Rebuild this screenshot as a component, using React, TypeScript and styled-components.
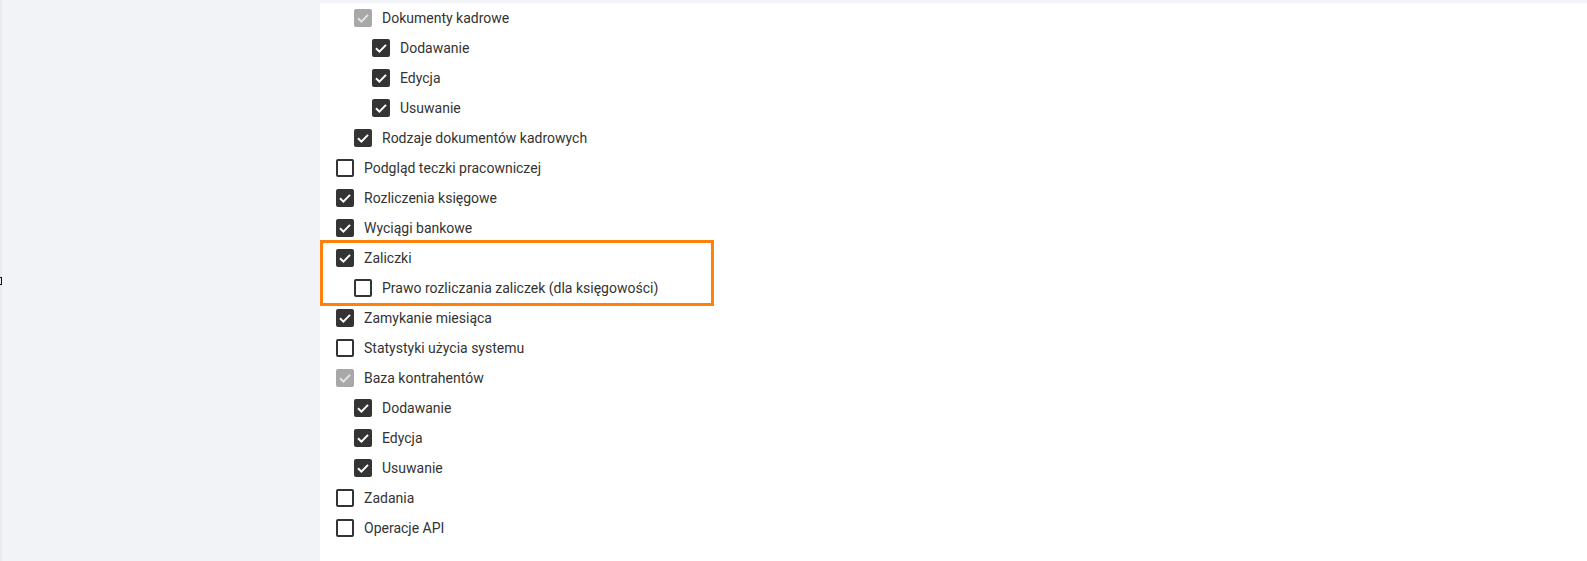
import React from "react";
import styled, { createGlobalStyle } from "styled-components";

type State = "on" | "off" | "mixed";

interface Perm {
	label: string;
	level: number;
	state: State;
}

const GlobalStyle = createGlobalStyle`
	html, body {
		margin: 0;
		padding: 0;
		background: #f1f3f7;
	}
	body {
		font-family: Roboto, "Noto Sans", Arial, sans-serif;
	}
`;

const Page = styled.div`
	display: flex;
	width: 1587px;
	height: 561px;
	overflow: hidden;
	background: #f1f3f7;
`;

const Sidebar = styled.aside`
	width: 320px;
	flex: none;
	border-left: 2px solid #e7ebf0;
	padding-top: 277px;
	box-sizing: border-box;
`;

/* little cut-off handle peeking in from the left edge */
const Handle = styled.span`
	display: block;
	width: 8px;
	height: 8px;
	margin-left: -8px;
	border: 1.5px solid #111;
	box-sizing: border-box;
`;

const Panel = styled.section`
	flex: 1;
	margin-top: 3px;
	background: #ffffff;
	padding-left: 16px;
`;

const Row = styled.label<{ $level: number }>`
	display: flex;
	align-items: center;
	gap: 10px;
	height: 30px;
	padding-left: ${(p) => p.$level * 18}px;
	font-size: 14px;
	color: #333333;
	cursor: pointer;
`;

const Box = styled.span<{ $state: State }>`
	display: flex;
	align-items: center;
	justify-content: center;
	width: 18px;
	height: 18px;
	flex: none;
	box-sizing: border-box;
	border-radius: 2px;
	border: ${(p) => (p.$state === "off" ? "2px solid #333333" : "none")};
	background: ${(p) => (p.$state === "on" ? "#343434" : p.$state === "mixed" ? "#a8a8a8" : "#ffffff")};
`;

const Highlight = styled.div`
	position: relative;

	&::after {
		content: "";
		position: absolute;
		top: -3px;
		bottom: -3px;
		left: -16px;
		width: 394px;
		border: 3px solid #ff800a;
		box-sizing: border-box;
		pointer-events: none;
	}
`;

const Check = ({ state }: { state: State }) => (
	<Box $state={state}>
		{state !== "off" && (
			<svg width="18" height="18" viewBox="0 0 18 18">
				<polyline
					points="4,9.3 7.4,12.6 14,5.9"
					fill="none"
					stroke={state === "on" ? "#ffffff" : "#e4e4e4"}
					strokeWidth="2"
				/>
			</svg>
		)}
	</Box>
);

const PermRow = ({ p }: { p: Perm }) => (
	<Row $level={p.level}>
		<Check state={p.state} />
		{p.label}
	</Row>
);

const before: Perm[] = [
	{ label: "Dokumenty kadrowe", level: 1, state: "mixed" },
	{ label: "Dodawanie", level: 2, state: "on" },
	{ label: "Edycja", level: 2, state: "on" },
	{ label: "Usuwanie", level: 2, state: "on" },
	{ label: "Rodzaje dokumentów kadrowych", level: 1, state: "on" },
	{ label: "Podgląd teczki pracowniczej", level: 0, state: "off" },
	{ label: "Rozliczenia księgowe", level: 0, state: "on" },
	{ label: "Wyciągi bankowe", level: 0, state: "on" },
];

const marked: Perm[] = [
	{ label: "Zaliczki", level: 0, state: "on" },
	{ label: "Prawo rozliczania zaliczek (dla księgowości)", level: 1, state: "off" },
];

const after: Perm[] = [
	{ label: "Zamykanie miesiąca", level: 0, state: "on" },
	{ label: "Statystyki użycia systemu", level: 0, state: "off" },
	{ label: "Baza kontrahentów", level: 0, state: "mixed" },
	{ label: "Dodawanie", level: 1, state: "on" },
	{ label: "Edycja", level: 1, state: "on" },
	{ label: "Usuwanie", level: 1, state: "on" },
	{ label: "Zadania", level: 0, state: "off" },
	{ label: "Operacje API", level: 0, state: "off" },
];

const App: React.FC = () => {
	return (
		<>
			<GlobalStyle />
			<Page>
				<Sidebar>
					<Handle />
				</Sidebar>
				<Panel>
					{before.map((p, i) => (
						<PermRow key={"b" + i} p={p} />
					))}
					<Highlight>
						{marked.map((p, i) => (
							<PermRow key={"m" + i} p={p} />
						))}
					</Highlight>
					{after.map((p, i) => (
						<PermRow key={"a" + i} p={p} />
					))}
				</Panel>
			</Page>
		</>
	);
};

export default App;
